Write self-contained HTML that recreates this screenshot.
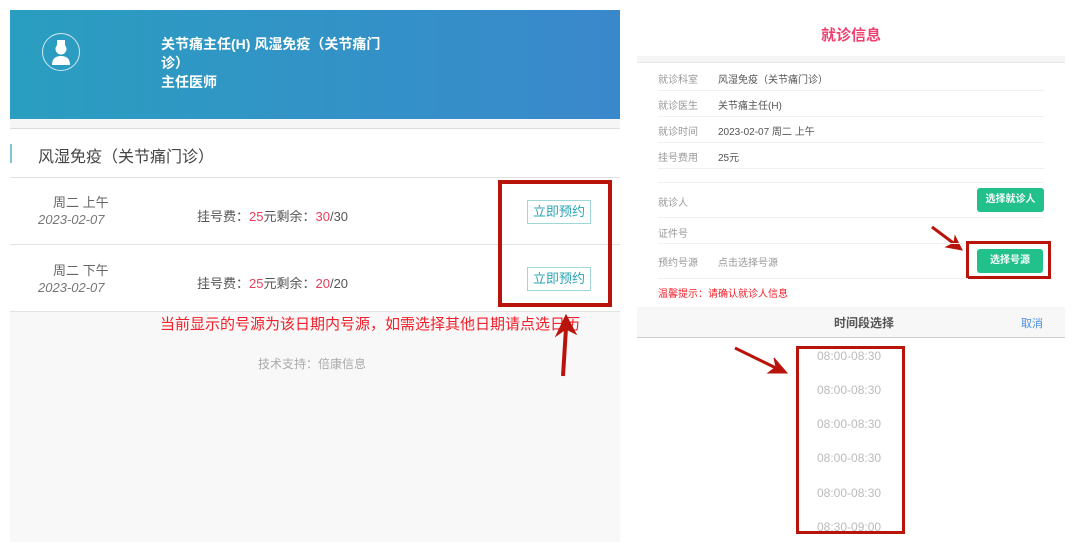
<!DOCTYPE html><html><head><meta charset="utf-8"><style>
*{margin:0;padding:0;box-sizing:border-box}
body{width:1080px;height:552px;background:#fff;position:relative;overflow:hidden;font-family:"Liberation Sans","Noto Sans CJK SC",sans-serif}
.a{position:absolute;white-space:nowrap}
.hl{position:absolute;height:1px;background:#e3e3e3}
.btn{position:absolute;border:1px solid #9fd6da;color:#2aa4b4;font-size:13px;text-align:center;line-height:22px;width:64px;height:24px}
.lb{position:absolute;left:658px;font-size:10px;color:#999}
.vl{position:absolute;left:718px;font-size:10px;color:#555}
.g{position:absolute;background:#22c08a;color:#fff;font-size:10px;font-weight:bold;text-align:center;border-radius:3px}
.t{position:absolute;left:817px;font-size:12px;color:#bbb}
</style></head><body>
<div class="a" style="left:10px;top:10px;width:610px;height:109px;background:linear-gradient(90deg,#2a9ec0,#3a88cc)"></div>
<div class="a" style="left:42px;top:33px;width:38px;height:38px;border:1.5px solid #cfe9f2;border-radius:50%"></div>
<svg class="a" style="left:49px;top:39px" width="24" height="28" viewBox="0 0 24 28"><rect x="8" y="1" width="8" height="5" fill="#fff"/><circle cx="12" cy="10" r="5.5" fill="#fff"/><path d="M3 26 Q3 17 12 17 Q21 17 21 26Z" fill="#fff"/></svg>
<div class="a" style="left:161px;top:35px;color:#fff;font-size:14px;font-weight:bold;line-height:19px">关节痛主任(H) 风湿免疫（关节痛门<br>诊）<br>主任医师</div>
<div class="a" style="left:10px;top:119px;width:610px;height:10px;background:#f6f6f6;border-bottom:1px solid #ddd"></div>
<div class="a" style="left:10px;top:144px;width:2px;height:19px;background:#7cc9d4"></div>
<div class="a" style="left:38px;top:143px;font-size:16px;color:#444">风湿免疫（关节痛门诊）</div>
<div class="hl" style="left:10px;top:177px;width:610px"></div>
<div class="a" style="left:53px;top:192px;font-size:13px;color:#666">周二 上午</div>
<div class="a" style="left:38px;top:212px;font-size:13px;color:#777;font-style:italic">2023-02-07</div>
<div class="a" style="left:197px;top:206px;font-size:13px;color:#555">挂号费：<span style="color:#e8405c">25</span>元剩余：<span style="color:#e8405c">30</span>/30</div>
<div class="btn" style="left:527px;top:200px">立即预约</div>
<div class="hl" style="left:10px;top:244px;width:610px"></div>
<div class="a" style="left:53px;top:260px;font-size:13px;color:#666">周二 下午</div>
<div class="a" style="left:38px;top:280px;font-size:13px;color:#777;font-style:italic">2023-02-07</div>
<div class="a" style="left:197px;top:273px;font-size:13px;color:#555">挂号费：<span style="color:#e8405c">25</span>元剩余：<span style="color:#e8405c">20</span>/20</div>
<div class="btn" style="left:527px;top:267px">立即预约</div>
<div class="a" style="left:10px;top:311px;width:610px;height:231px;background:#f8f8f8;border-top:1px solid #e3e3e3"></div>
<div class="a" style="left:160px;top:313px;font-size:15px;color:#f2202a">当前显示的号源为该日期内号源，如需选择其他日期请点选日历</div>
<div class="a" style="left:258px;top:355px;font-size:12px;color:#aaa">技术支持：倍康信息</div>
<div class="a" style="left:498px;top:180px;width:114px;height:127px;border:4px solid #b8140c"></div>
<svg class="a" style="left:0;top:0" width="1080" height="552"><g stroke="#b8140c" fill="#b8140c"><line x1="563" y1="376" x2="566" y2="328" stroke-width="4"/><path d="M566 315 L556 336 L566 329 L576 334Z"/><line x1="735" y1="348" x2="778" y2="369" stroke-width="3"/><path d="M787 373 L768 373 L776 367 L774 358Z"/><line x1="932" y1="227" x2="956" y2="245" stroke-width="3"/><path d="M962 250 L946 247 L954 243 L955 236Z"/></g></svg>
<div class="a" style="left:637px;top:24px;width:428px;text-align:center;font-size:15px;font-weight:bold;color:#ee3f6e">就诊信息</div>
<div class="a" style="left:637px;top:56px;width:428px;height:7px;background:#f5f5f5;border-bottom:1px solid #e5e5e5"></div>
<div class="lb" style="top:71px">就诊科室</div><div class="vl" style="top:71px">风湿免疫（关节痛门诊）</div>
<div class="hl" style="left:658px;top:90px;width:386px;background:#f0f0f0"></div>
<div class="lb" style="top:97px">就诊医生</div><div class="vl" style="top:97px">关节痛主任(H)</div>
<div class="hl" style="left:658px;top:116px;width:386px;background:#f0f0f0"></div>
<div class="lb" style="top:123px">就诊时间</div><div class="vl" style="top:123px">2023-02-07 周二 上午</div>
<div class="hl" style="left:658px;top:142px;width:386px;background:#f0f0f0"></div>
<div class="lb" style="top:149px">挂号费用</div><div class="vl" style="top:149px">25元</div>
<div class="hl" style="left:658px;top:168px;width:386px;background:#f0f0f0"></div>
<div class="hl" style="left:658px;top:182px;width:386px;background:#f0f0f0"></div>
<div class="lb" style="top:194px">就诊人</div>
<div class="g" style="left:977px;top:188px;width:67px;height:24px;line-height:24px">选择就诊人</div>
<div class="hl" style="left:658px;top:217px;width:386px;background:#f0f0f0"></div>
<div class="lb" style="top:225px">证件号</div>
<div class="hl" style="left:658px;top:243px;width:386px;background:#f0f0f0"></div>
<div class="lb" style="top:254px">预约号源</div><div class="vl" style="top:254px;color:#999">点击选择号源</div>
<div class="g" style="left:977px;top:249px;width:66px;height:24px;line-height:24px">选择号源</div>
<div class="a" style="left:966px;top:241px;width:85px;height:38px;border:3px solid #b8140c"></div>
<div class="hl" style="left:658px;top:278px;width:310px;background:#f0f0f0"></div>
<div class="a" style="left:658px;top:285px;font-size:10px;color:#f0202a">温馨提示：请确认就诊人信息</div>
<div class="a" style="left:637px;top:307px;width:428px;height:31px;background:#f7f7f7;border-bottom:1px solid #ccc"></div>
<div class="a" style="left:834px;top:314px;font-size:12px;color:#555;font-weight:bold">时间段选择</div>
<div class="a" style="left:1021px;top:315px;font-size:11px;color:#4a8fe0">取消</div>
<div class="t" style="top:349px">08:00-08:30</div>
<div class="t" style="top:383px">08:00-08:30</div>
<div class="t" style="top:417px">08:00-08:30</div>
<div class="t" style="top:451px">08:00-08:30</div>
<div class="t" style="top:486px">08:00-08:30</div>
<div class="t" style="top:520px">08:30-09:00</div>
<div class="a" style="left:796px;top:346px;width:109px;height:188px;border:3px solid #b8140c"></div>
</body></html>
